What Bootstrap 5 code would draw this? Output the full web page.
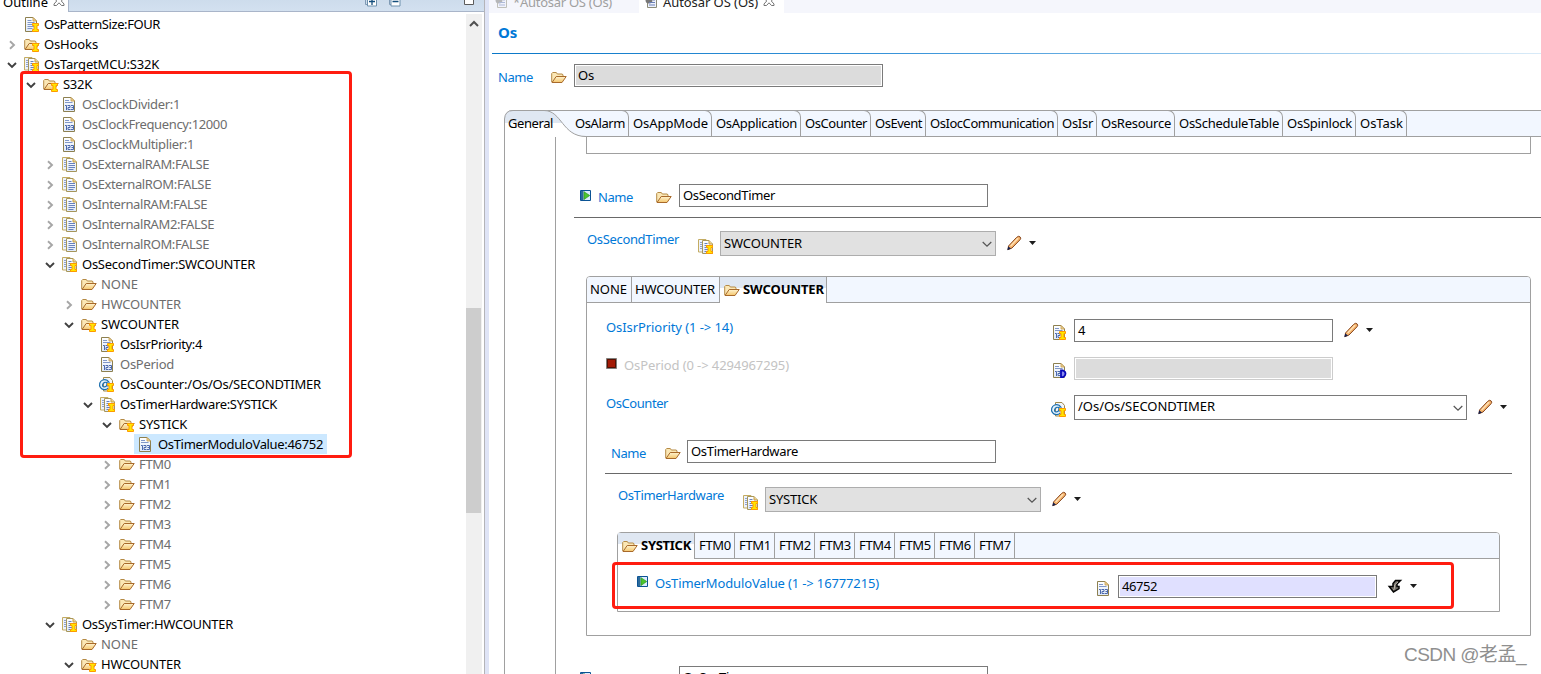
<!DOCTYPE html>
<html lang="en">
<head>
<meta charset="utf-8">
<title>Autosar OS (Os)</title>
<link rel="stylesheet" href="https://cdn.jsdelivr.net/npm/bootstrap@5.3.0/dist/css/bootstrap.min.css">
<script src="https://cdn.jsdelivr.net/npm/bootstrap@5.3.0/dist/js/bootstrap.bundle.min.js"></script>
<style>
body{font:13px/20px "Noto Sans","Noto Sans CJK SC",sans-serif;color:#000;height:674px;overflow:hidden;background:#fff}
svg{display:block;flex:none}
.txt{white-space:nowrap;line-height:20px}
.ic{width:16px;height:16px;overflow:visible}
/* outline view */
.outline{width:485px;border-right:1px solid #b4b4b8}
.viewhead{height:13px;background:linear-gradient(#cddcec,#d3e1f0);overflow:hidden}
.viewtab{width:69px;background:#fff;padding-left:3px;border-right:1px solid #a9b5c9}
.viewtools{border-bottom:1px solid #a9b5c9;padding-left:296px}
.up{margin-top:-8px}
.tree{padding-top:2px}
.node{height:20px}
.twist{width:19px;height:20px;padding:6px 0 0 2.5px}
.twist svg{width:10px;height:10px}
.cell{padding:2px 0 0 1px;width:21px;height:20px}
.chosen{background:#cce8ff;margin-left:-3px;padding-left:3px;padding-right:4px}
.dim{color:#6d6d6d}
.bar{width:16px;background:#f0f0f0;margin:2px 2px 0 0}
.bar svg{margin:5px 0 0 3px}
.thumb{height:205px;margin-top:279px;background:#cdcdcd;width:15px}
.sash{width:4px;background:#dfe4f6}
/* editor */
.edhead{height:13px;background:#f5f6fc;overflow:hidden}
.edtab{padding-left:5px;width:150px;color:#a0a0a0}
.edtab.on{background:#fff;color:#222;width:145px}
.edtab .ic{margin:-7px 3px 0 0}
.x-ico{margin:-5px 0 0 5px}
.title{height:40px;padding:9px 0 0 9px;font-size:15px;font-weight:700;color:#0078d7}
.rule-blue{height:1px;margin-left:3px;background:linear-gradient(90deg,#0a78c8,#3b95da 40%,#d9ebf8)}
.lbl{color:#0078d7}
.off{color:#c3c3c3}
.line{background:#696969;height:1px}
.fld{height:23px;border:1px solid #7a7a7a;padding:1px;background:#fff}
.fld>div{height:19px;padding-left:2px;line-height:19px}
.fill-grey{background:#dcdcdc}
.fill-lilac{background:#e0e0ff}
.fld.muted{border-color:#ccc}
.w309{width:309px}.w259{width:259px}.w276{width:276px}.w393{width:393px}
.combo{height:25px;border:1px solid #adadad;background:#e1e1e1;padding:1px 3px 0 3px}
.combo.open{background:#fff;border-color:#7a7a7a;padding-top:0}
.combo svg{margin-top:7px}
.combo.open svg{margin-top:8px}
.frm{display:flex;align-items:flex-start;height:23px}
.frm.tall{height:25px}
.frm>.txt{margin-top:-2px;flex:none}
.frm>.ic{margin-top:5px}
.frm.tall>.ic{margin-top:7px}
.frm.tall.prm>.ic{margin-top:6px}
.nm>.txt{margin-top:3px}
.nm>.ic{margin-top:5px}
.frm>.mk{width:12px;height:12px;margin:1px 6px 0 0}
.nm>.mk{margin-top:6px}
.frm>.pen{width:16px;height:16px;margin:3px 0 0 10px}
.frm.tall>.pen{margin-top:4px}
.frm>.car{width:7px;height:4px;margin:9px 0 0 7px}
.frm.tall>.car{margin-top:10px}
.a-top{margin:10px 0 23px 9px}
.a-top .txt{width:53px}.a-top .ic{margin-right:7px}
.a-sec{padding-left:24px;margin-top:30px}.a-sec .lbl{width:58px}.a-sec .ic{margin-right:7px}
.a-pick{padding-left:31px;margin-top:13px}.a-pick>.lbl{width:111px}.a-pick>.ic{margin-right:6px}
.prm{padding-left:19px;margin-top:15px}
.lead-prm{margin-top:16px}
.prm>.lbl{width:446px}.prm>.mk+.txt{width:428px}.prm>.ic{margin-right:6px}
.prm.deep{margin-top:16px;margin-bottom:13px}.prm.deep>.mk+.txt{width:441px}
.b-name{padding-left:24px;margin-top:20px}.b-name>.lbl{width:54px}.b-name>.ic{margin-right:6px}
.b-pick{padding-left:31px;margin-top:13px}.b-pick>.lbl{width:125px}.b-pick>.ic{margin-right:6px}
.line-a{margin:10px 0 0 18px}
.line-b{margin:10px 0 0 18px;width:907px}
.pages{margin-left:15px}
.strip{height:27px;background:#f2f7ff;border-top:1px solid #a0a0a0;border-bottom:1px solid #a0a0a0}
.pg{height:26px;border-right:1px solid #a0a0a0;padding:2px 0 0 4px;flex:none}
.pg.tight{padding-left:3px}
.curve .pg{border-top:1px solid #a0a0a0;border-radius:0 7px 0 0;margin-top:-1px}
.first{width:67px;position:relative;padding:2px 0 0 4px;flex:none}
.first svg{position:absolute;left:0;top:-1px}
.first .txt{position:relative}
.body1{border-left:1px solid #a0a0a0;padding-left:50px}
.body2{border-left:1px solid #a0a0a0;height:540px}
.stub{height:17px;width:945px;margin-left:30px;border:1px solid #a0a0a0;border-top:0}
.boxed{border:1px solid #a0a0a0;border-radius:4px 4px 0 0;margin-top:20px}
.boxed>.strip{height:26px;border-top:0;border-radius:3px 3px 0 0}
.boxed .pg{height:25px}
.boxed .pg.cur{height:26px;background:linear-gradient(#dfe7f2 11px,#fff 11px);font-weight:700}
.box-a{width:945px;margin-left:30px;padding-bottom:23px}
.box-b{width:883px;margin-left:30px}
.cur .ic{margin:3px 3px 0 0}
.mark-red{position:absolute;border:3px solid #ff1c10;border-radius:4px;z-index:3}
.m1{left:20px;top:71px;width:332px;height:387px}
.m2{left:612px;top:562px;width:842px;height:47px}
.wm{position:absolute;left:1404px;top:641px;font:19px/28px "Liberation Sans","Noto Sans CJK SC",sans-serif;color:#8f8f8f;white-space:nowrap}
.p45{width:45px}.p83{width:83px}.p89{width:89px}.p70{width:70px}.p55{width:55px}.p132{width:132px}.p39{width:39px}.p78{width:78px}.p108{width:108px}.p73{width:73px}.p51{width:51px}.p88{width:88px}.p107{width:107px}.p77{width:77px}.p40{width:40px}.p58{width:58px}
</style>
</head>
<body class="position-relative">
<svg width="0" height="0" class="position-absolute">
<defs>
<linearGradient id="gf" x1="0" y1="0" x2="0" y2="1"><stop offset="0" stop-color="#fff3cf"/><stop offset="1" stop-color="#f4c66c"/></linearGradient>
<linearGradient id="gp" x1="0" y1="0" x2="0" y2="1"><stop offset="0" stop-color="#fff"/><stop offset="1" stop-color="#dfe9f8"/></linearGradient>
<symbol id="folder" viewBox="0 0 16 16"><path d="M.7 13V4.500L1.700 3.500h3.600l1 1.500h5l.7 1V7.500" fill="#fbe7b5" stroke="#b58a45"/><path d="M1 13.500 5.200 7.500H15.200L11 13.500z" fill="url(#gf)" stroke="#a8692a"/></symbol>
<symbol id="imark" viewBox="0 0 16 16"><path d="M8.500 7.500h6v2h-1.500v4h1.500v2h-6v-2h1.500v-4h-1.500z" fill="#ffe600" stroke="#ff9a00"/></symbol>
<symbol id="folderI" viewBox="0 0 16 16"><use href="#folder"/><use href="#imark"/></symbol>
<symbol id="page" viewBox="0 0 16 16"><path d="M1.500 1.500h7.500l3.500 3.500v10.500h-11z" fill="url(#gp)" stroke="#8d8050"/><path d="M9 1.500v3.500h3.500z" fill="#efd79a" stroke="#c49b4b" stroke-width=".8"/></symbol>
<symbol id="doc" viewBox="0 0 16 16"><use href="#page"/><path d="M3.500 4.500h4M3.500 6.500h7M3.500 8.500h7M3.500 10.500h7M3.500 12.500h5" stroke="#7f97c8"/></symbol>
<symbol id="docI" viewBox="0 0 16 16"><use href="#doc"/><use href="#imark"/></symbol>
<symbol id="num" viewBox="0 0 16 16"><use href="#page"/><path d="M3 4.500h4M3 6.500h7.500" stroke="#8197c8"/><path d="M3 9.500h1.500v4.500M5.500 9.500h2.500v2h-2v2h2.500M9 9.500h2.500v4H9M9.500 11.500h2" fill="none" stroke="#4b68ac"/></symbol>
<symbol id="numI" viewBox="0 0 16 16"><use href="#num"/><use href="#imark" x="-1"/></symbol>
<symbol id="numD" viewBox="0 0 16 16"><use href="#num"/><path d="M9 8.500h2q2.500 1 2.500 3.200t-2.500 3.500H9z" fill="#8a8af0" stroke="#0707b8" stroke-width="1.800"/></symbol>
<symbol id="multi" viewBox="0 0 16 16"><path d="M.500 1.500h7.500v12.500h-7.500z" fill="#eef2fb" stroke="#c4ac62"/><path d="M2 4.500h2M2 6.500h2M2 8.500h2M2 10.500h2" stroke="#8fa3cf"/><path d="M4.500 2.500h6.500l3.500 3.500v9.500h-10z" fill="url(#gp)" stroke="#a6965c"/><path d="M11 2.500V6h3.500" fill="#eed391" stroke="#c4a04c"/><path d="M6.500 5.500h3M6.500 7.500h6.500M6.500 9.500h6.500M6.500 11.500h6.500M6.500 13.500h5" stroke="#6881bd"/></symbol>
<symbol id="multiI" viewBox="0 0 16 16"><use href="#multi"/><use href="#imark"/></symbol>
<symbol id="refI" viewBox="0 0 16 16" overflow="visible"><path d="M3.500 1.500h6.500l2.500 3v10.500h-9z" fill="#f2f5fc" stroke="#a08a4c"/><path d="M8.400 11.800A5 5 0 1 1 9.500 8c0 2.500-3 2.600-2.700.300l.500-2.600M7 7.500C6.500 5.500 3.200 6 2.600 8.700s3.200 3.200 4.300.300" fill="#e4f2fc" stroke="#1d6fae" stroke-width="1.200"/><use href="#imark" x="-1"/></symbol>
<symbol id="play" viewBox="0 0 12 12"><path d="M.5.500h10v10H.5z" fill="#dcecff" stroke="#0b5394"/><path d="M1 1h2.500v9H1z" fill="#2c6a9a"/><path d="M4 1.700 9.700 5.500 4 9.500z" fill="#4cc52c" stroke="#2c9a20" stroke-width=".7"/></symbol>
<symbol id="stop" viewBox="0 0 12 12"><path d="M.5.500h10v10H.5z" fill="#a31b06" stroke="#80807c"/><path d="M1.500 9.500v-8h8v8z" fill="none" stroke="#531004"/></symbol>
<symbol id="pencil" viewBox="0 0 16 16"><path d="M2.500 11 10.500 2.500q2-2 3.500-.7t0 3L6 13l-4 1.700z" fill="#f6b46c" stroke="#87461e"/><path d="M4.700 11 12 3.200" stroke="#ffe0b4" stroke-width="1.500"/><path d="M1.200 15.300 2.300 11.500 5 13.500z" fill="#14204e"/></symbol>
<symbol id="bolt" viewBox="0 0 16 16"><path d="M13.500 2.500H8.500L6 5.500V8.500H2.200l4.300 5.500 5.500-3.300V8.500H10V6z" fill="#77736c" stroke="#050505" stroke-width="1.500"/><path d="M11 4 7.500 7v3.500L6.500 12" fill="none" stroke="#b9b4aa"/></symbol>
<symbol id="caret" viewBox="0 0 7 4"><path d="M0 0h7L3.500 4z" fill="#1c1c1c"/></symbol>
<symbol id="down" viewBox="0 0 10 10"><path d="M1 3l4 4 4-4" fill="none" stroke="#404040" stroke-width="1.900"/></symbol>
<symbol id="right" viewBox="0 0 10 10"><path d="M3 1.200 7 5 3 8.800" fill="none" stroke="#a6a6a6" stroke-width="1.900"/></symbol>
<symbol id="chev" viewBox="0 0 10 10"><path d="M.7 2 5 6.200 9.300 2" fill="none" stroke="#555" stroke-width="1.200"/></symbol>
<symbol id="close" viewBox="0 0 12 12"><path d="M1 1.500h2.500L6 4.300 8.500 1.500H11V3L8.300 6 11 9v1.500H8.500L6 7.800 3.500 10.500H1V9l2.700-3L1 3z" fill="#fff" stroke="#666" stroke-width=".9"/></symbol>
<symbol id="edico" viewBox="0 0 16 16"><path d="M3.500 4.500h9v10h-9z" fill="#eef2fc" stroke="#8a8a78"/><circle cx="5" cy="7" r="3.500" fill="#777"/><path d="M5 9.500h6M5 12h6M9 7h2" stroke="#6a7fb6"/></symbol>
</defs></svg>

<div class="d-flex h-100">
  <section class="outline d-flex flex-column flex-shrink-0">
    <div class="viewhead d-flex">
      <div class="viewtab d-flex"><span class="txt up" data-w="45">Outline</span><svg class="x-ico" width="12" height="12"><use href="#close"/></svg></div>
      <div class="viewtools flex-grow-1 d-flex">
        <svg width="36" height="7"><path d="M.5 0v4.500H2M24.500 0v4.500h2" fill="none" stroke="#7f9ab5"/><path d="M2.500-1h9v7h-9z" fill="#fff" stroke="#6e91ad"/><path d="M26-1h9v7h-9z" fill="#fff" stroke="#6e91ad"/><path d="M4 1.500h6M7 0v5M27.500 1.500h6" stroke="#134e7c" stroke-width="1.300"/></svg>
        <svg width="10" height="5" class="ms-auto me-2 pe-0" style="transform:translateX(-2px)"><path d="M.5-1h9v5.500h-9z" fill="#fff" stroke="#5c5c5c"/></svg>
      </div>
    </div>
    <div class="d-flex flex-grow-1">
      <div class="tree flex-grow-1" id="tree"></div>
      <div class="bar"><svg width="10" height="10"><path d="M1 7l4-4 4 4" fill="none" stroke="#505050" stroke-width="2"/></svg><div class="thumb"></div></div>
    </div>
  </section>
  <div class="sash flex-shrink-0"></div>

  <main class="flex-grow-1 overflow-hidden">
    <div class="edhead d-flex">
      <div class="edtab d-flex"><svg class="ic opacity-50"><use href="#edico"/></svg><span class="txt up" data-w="99">*Autosar OS (Os)</span></div>
      <div class="edtab on d-flex"><svg class="ic"><use href="#edico"/></svg><span class="txt up" data-w="95">Autosar OS (Os)</span><svg class="x-ico" width="12" height="12"><use href="#close"/></svg></div>
    </div>
    <div class="title">Os</div>
    <div class="rule-blue"></div>
    <div class="frm nm a-top"><span class="txt lbl"><span data-w="35">Name</span></span><svg class="ic"><use href="#folder"/></svg><div class="fld w309"><div class="fill-grey"><span data-w="16">Os</span></div></div></div>

    <div class="pages">
      <div class="strip curve d-flex">
        <div class="first">
          <svg width="82" height="27"><defs><linearGradient id="gt" x1="0" y1="0" x2="0" y2="27" gradientUnits="userSpaceOnUse"><stop offset=".48" stop-color="#dfe7f2"/><stop offset=".48" stop-color="#fff"/></linearGradient></defs><path d="M0 0h8Q1 1 0 8z" fill="#fff"/><path d="M.5 27V9Q1 .5 9 .5H40C58 .5 58 26.500 82 26.500V27z" fill="url(#gt)"/><path d="M.5 27V9Q1 .5 9 .5H40C58 .5 58 26.500 82 26.500" fill="none" stroke="#a0a0a0"/></svg>
          <span class="txt" data-w="45">General</span>
        </div>
        <div class="pg p58"><span class="txt" data-w="50">OsAlarm</span></div>
        <div class="pg p83"><span class="txt" data-w="75">OsAppMode</span></div>
        <div class="pg p89"><span class="txt" data-w="81">OsApplication</span></div>
        <div class="pg p70"><span class="txt" data-w="62">OsCounter</span></div>
        <div class="pg p55"><span class="txt" data-w="47">OsEvent</span></div>
        <div class="pg p132"><span class="txt" data-w="124">OsIocCommunication</span></div>
        <div class="pg p39"><span class="txt" data-w="31">OsIsr</span></div>
        <div class="pg p78"><span class="txt" data-w="70">OsResource</span></div>
        <div class="pg p108"><span class="txt" data-w="100">OsScheduleTable</span></div>
        <div class="pg p73"><span class="txt" data-w="65">OsSpinlock</span></div>
        <div class="pg p51"><span class="txt" data-w="43">OsTask</span></div>
      </div>
      <div class="body1"><div class="body2">
        <div class="stub"></div>
        <div class="frm nm a-sec"><svg class="mk"><use href="#play"/></svg><span class="txt lbl"><span data-w="35">Name</span></span><svg class="ic"><use href="#folder"/></svg><div class="fld w309"><div><span data-w="92">OsSecondTimer</span></div></div></div>
        <div class="line line-a"></div>
        <div class="frm tall a-pick"><span class="txt lbl"><span data-w="92">OsSecondTimer</span></span><svg class="ic"><use href="#multiI"/></svg><div class="combo w276 d-flex justify-content-between"><span data-w="78">SWCOUNTER</span><svg width="10" height="10"><use href="#chev"/></svg></div><svg class="pen"><use href="#pencil"/></svg><svg class="car"><use href="#caret"/></svg></div>

        <div class="boxed box-a">
          <div class="strip d-flex">
            <div class="pg tight p45"><span class="txt" data-w="37">NONE</span></div>
            <div class="pg tight p88"><span class="txt" data-w="80">HWCOUNTER</span></div>
            <div class="pg cur p107 d-flex"><svg class="ic"><use href="#folder"/></svg><span class="txt" data-w="81">SWCOUNTER</span></div>
          </div>
          <div class="frm prm lead-prm"><span class="txt lbl"><span data-w="127">OsIsrPriority (1 -&gt; 14)</span></span><svg class="ic"><use href="#numI"/></svg><div class="fld w259"><div><span>4</span></div></div><svg class="pen"><use href="#pencil"/></svg><svg class="car"><use href="#caret"/></svg></div>
          <div class="frm prm"><svg class="mk"><use href="#stop"/></svg><span class="txt off"><span data-w="165">OsPeriod (0 -&gt; 4294967295)</span></span><svg class="ic"><use href="#numD"/></svg><div class="fld muted w259"><div class="fill-grey"></div></div></div>
          <div class="frm tall prm"><span class="txt lbl"><span data-w="62">OsCounter</span></span><svg class="ic"><use href="#refI"/></svg><div class="combo open w393 d-flex justify-content-between"><span data-w="137">/Os/Os/SECONDTIMER</span><svg width="10" height="10"><use href="#chev"/></svg></div><svg class="pen"><use href="#pencil"/></svg><svg class="car"><use href="#caret"/></svg></div>
          <div class="frm nm b-name"><span class="txt lbl"><span data-w="35">Name</span></span><svg class="ic"><use href="#folder"/></svg><div class="fld w309"><div><span data-w="107">OsTimerHardware</span></div></div></div>
          <div class="line line-b"></div>
          <div class="frm tall b-pick"><span class="txt lbl"><span data-w="106">OsTimerHardware</span></span><svg class="ic"><use href="#multiI"/></svg><div class="combo w276 d-flex justify-content-between"><span data-w="48">SYSTICK</span><svg width="10" height="10"><use href="#chev"/></svg></div><svg class="pen"><use href="#pencil"/></svg><svg class="car"><use href="#caret"/></svg></div>
          <div class="boxed box-b">
            <div class="strip d-flex">
              <div class="pg cur p77 d-flex"><svg class="ic"><use href="#folder"/></svg><span class="txt" data-w="50">SYSTICK</span></div>
              <div class="pg p40"><span class="txt" data-w="32">FTM0</span></div>
              <div class="pg p40"><span class="txt" data-w="32">FTM1</span></div>
              <div class="pg p40"><span class="txt" data-w="32">FTM2</span></div>
              <div class="pg p40"><span class="txt" data-w="32">FTM3</span></div>
              <div class="pg p40"><span class="txt" data-w="32">FTM4</span></div>
              <div class="pg p40"><span class="txt" data-w="32">FTM5</span></div>
              <div class="pg p40"><span class="txt" data-w="32">FTM6</span></div>
              <div class="pg p40"><span class="txt" data-w="32">FTM7</span></div>
            </div>
            <div class="frm prm deep"><svg class="mk"><use href="#play"/></svg><span class="txt lbl"><span data-w="224">OsTimerModuloValue (1 -&gt; 16777215)</span></span><svg class="ic"><use href="#num"/></svg><div class="fld w259"><div class="fill-lilac"><span data-w="35">46752</span></div></div><svg class="pen"><use href="#bolt"/></svg><svg class="car"><use href="#caret"/></svg></div>
          </div>
        </div>
        <div class="frm nm a-sec"><svg class="mk"><use href="#play"/></svg><span class="txt lbl"><span data-w="35">Name</span></span><svg class="ic"><use href="#folder"/></svg><div class="fld w309"><div><span data-w="71">OsSysTimer</span></div></div></div>
      </div></div>
    </div>
  </main>
</div>
<div class="mark-red m1"></div>
<div class="mark-red m2"></div>
<div class="wm"><span data-w="122">CSDN @老孟_</span></div>

<script>
// level, twistie, icon, label, label width, dimmed
const nodes=[
[0,'','docI','OsPatternSize:FOUR',116,0],[0,'right','folderI','OsHooks',54,0],[0,'down','multiI','OsTargetMCU:S32K',115,0],
[1,'down','folderI','S32K',29,0],[2,'','num','OsClockDivider:1',98,1],[2,'','num','OsClockFrequency:12000',145,1],[2,'','num','OsClockMultiplier:1',112,1],
[2,'right','multi','OsExternalRAM:FALSE',127,1],[2,'right','multi','OsExternalROM:FALSE',129,1],[2,'right','multi','OsInternalRAM:FALSE',125,1],
[2,'right','multi','OsInternalRAM2:FALSE',132,1],[2,'right','multi','OsInternalROM:FALSE',127,1],[2,'down','multiI','OsSecondTimer:SWCOUNTER',173,0],
[3,'','folder','NONE',37,1],[3,'right','folder','HWCOUNTER',80,1],[3,'down','folderI','SWCOUNTER',78,0],
[4,'','numI','OsIsrPriority:4',82,0],[4,'','num','OsPeriod',54,1],[4,'','refI','OsCounter:/Os/Os/SECONDTIMER',201,0],
[4,'down','multiI','OsTimerHardware:SYSTICK',157,0],[5,'down','folderI','SYSTICK',48,0],[6,'','num','OsTimerModuloValue:46752',165,0],
...[0,1,2,3,4,5,6,7].map(i=>[5,'right','folder','FTM'+i,32,1]),
[2,'down','multiI','OsSysTimer:HWCOUNTER',151,0],[3,'','folder','NONE',37,1],[3,'down','folderI','HWCOUNTER',80,0]];
document.getElementById('tree').innerHTML=nodes.map(([l,t,i,s,w,d])=>
`<div class="node d-flex" style="padding-left:${4+19*l}px"><div class="twist">${t?`<svg><use href="#${t}"/></svg>`:''}</div><div class="d-flex ${l==6?'chosen':''}"><div class="cell"><svg class="ic"><use href="#${i}"/></svg></div><span class="txt ${d?'dim':''}" data-w="${w}">${s}</span></div></div>`).join('');
document.querySelectorAll('[data-w]').forEach(e=>{
  const r=document.createRange();r.selectNodeContents(e);
  const n=[...e.textContent].length;
  e.style.letterSpacing=((e.dataset.w-r.getBoundingClientRect().width)/n).toFixed(3)+'px';
});
</script>
</body>
</html>
